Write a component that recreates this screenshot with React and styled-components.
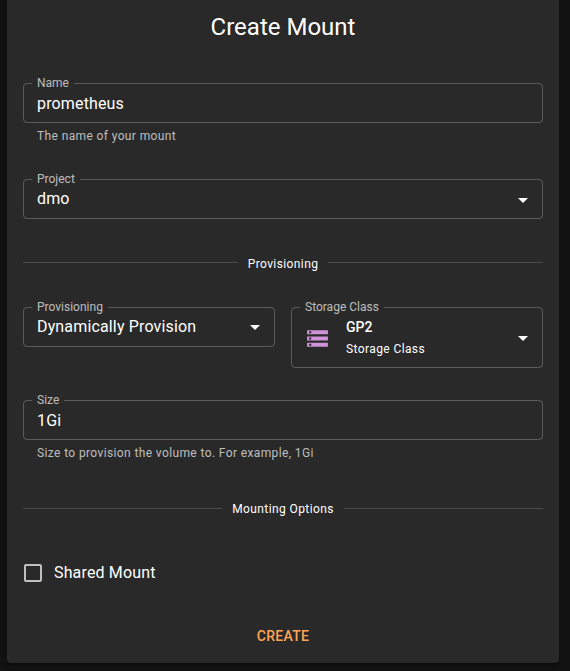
import React from "react";
import styled, { createGlobalStyle } from "styled-components";

const Global = createGlobalStyle`
  html, body { margin: 0; padding: 0; background: #121212; }
  body { font-family: Roboto, "Liberation Sans", sans-serif; color: #fff; overflow: hidden; }
`;

const Page = styled.div`
  width: 570px;
  height: 671px;
  padding: 0 11px 8px 7px;
  box-sizing: border-box;
`;

const Card = styled.form`
  height: 663px;
  box-sizing: border-box;
  background: #292929;
  border-radius: 0 0 4px 4px;
  box-shadow: 0 2px 4px rgba(0, 0, 0, 0.4);
  padding: 0 16px;
  display: flex;
  flex-direction: column;
`;

const Title = styled.h2`
  margin: 0;
  padding-top: 11px;
  height: 77px;
  box-sizing: border-box;
  text-align: center;
  font-size: 24px;
  font-weight: 400;
  line-height: 32px;
  letter-spacing: 0;
`;

const Outline = styled.fieldset`
  margin: 0;
  padding: 0 13px;
  min-width: 0;
  min-height: ${(p) => p.$height + 6}px;
  box-sizing: border-box;
  border: 1px solid rgba(255, 255, 255, 0.23);
  border-radius: 4px;
  display: flex;
  align-items: ${(p) => (p.$center ? "center" : "flex-start")};
  flex: ${(p) => (p.$grow ? "1 1 0" : "none")};
`;

const Legend = styled.legend`
  margin-left: -5px;
  padding: 0 5px;
  font-size: 12px;
  line-height: 12px;
  color: rgba(255, 255, 255, 0.7);
  letter-spacing: 0;
`;

const Value = styled.div`
  flex: 1;
  padding-top: ${(p) => (p.$select ? 1.5 : 3)}px;
  font-size: 16px;
  line-height: 23px;
  letter-spacing: 0.15px;
  color: #fff;
`;

const Arrow = styled.svg`
  width: 24px;
  height: 24px;
  fill: #fff;
  flex: none;
  margin-right: -6px;
  margin-top: ${(p) => p.$offset}px;
`;

const Helper = styled.p`
  margin: 3px 0 0 14px;
  font-size: 12px;
  line-height: 20px;
  letter-spacing: 0.38px;
  color: rgba(255, 255, 255, 0.7);
`;

const Group = styled.div`
  margin-bottom: ${(p) => p.$after}px;
`;

const Divider = styled.div`
  display: flex;
  align-items: center;
  gap: 10px;
  height: 14px;
  font-size: 12px;
  letter-spacing: 0.4px;
  color: #fff;
  margin-bottom: ${(p) => p.$after}px;
  &::before,
  &::after {
    content: "";
    flex: 1;
    height: 1px;
    background: rgba(255, 255, 255, 0.16);
  }
`;

const DividerLabel = styled.span`
  margin-top: ${(p) => p.$drop}px;
`;

const Row = styled.div`
  display: flex;
  align-items: flex-start;
  gap: 16px;
  margin-bottom: 26px;
`;

const StorageIcon = styled.svg`
  width: 25px;
  height: 25px;
  fill: #ce93d8;
  flex: none;
  margin: 4px 16px 0 0;
`;

const StorageText = styled.div`
  flex: 1;
  margin-top: 4px;
`;

const StorageName = styled.div`
  font-size: 14px;
  font-weight: 500;
  line-height: 20px;
`;

const StorageCaption = styled.div`
  font-size: 12px;
  line-height: 20px;
  letter-spacing: 0.4px;
  margin-top: 2px;
`;

const CheckLabel = styled.label`
  display: flex;
  align-items: center;
  gap: 12px;
  height: 24px;
  font-size: 16px;
  letter-spacing: 0.15px;
  margin-left: -2px;
  margin-bottom: 39px;
`;

const CheckBox = styled.svg`
  width: 24px;
  height: 24px;
  fill: rgba(255, 255, 255, 0.7);
  flex: none;
  margin-right: -3px;
`;

const CheckText = styled.span`
  margin-bottom: 2px;
`;

const Submit = styled.button`
  align-self: center;
  background: none;
  border: 0;
  padding: 0;
  font-family: inherit;
  font-size: 14px;
  font-weight: 500;
  line-height: 24px;
  letter-spacing: 0.3px;
  color: #ffa657;
  text-transform: uppercase;
`;

const ArrowDrop = ({ offset = 0 }) => (
  <Arrow viewBox="0 0 24 24" $offset={offset}>
    <path d="M7 10l5 5 5-5z" />
  </Arrow>
);

const Field = ({ label, height = 40, grow, center, children }) => (
  <Outline $height={height} $grow={grow} $center={center}>
    <Legend>{label}</Legend>
    {children}
  </Outline>
);

export default function App() {
  return (
    <Page>
      <Global />
      <Card>
        <Title>Create Mount</Title>
        <Group $after={27}>
          <Field label="Name">
            <Value>prometheus</Value>
          </Field>
          <Helper>The name of your mount</Helper>
        </Group>
        <Group $after={36}>
          <Field label="Project">
            <Value $select>dmo</Value>
            <ArrowDrop offset={3} />
          </Field>
        </Group>
        <Divider $after={32}>
          <DividerLabel $drop={4}>Provisioning</DividerLabel>
        </Divider>
        <Row>
          <Field label="Provisioning" grow>
            <Value $select>Dynamically Provision</Value>
            <ArrowDrop offset={2} />
          </Field>
          <Field label="Storage Class" height={61} grow center>
            <StorageIcon viewBox="0 0 24 24">
              <path d="M2 20h20v-4H2v4zm2-3h2v2H4v-2zM2 4v4h20V4H2zm4 3H4V5h2v2zm-4 7h20v-4H2v4zm2-3h2v2H4v-2z" />
            </StorageIcon>
            <StorageText>
              <StorageName>GP2</StorageName>
              <StorageCaption>Storage Class</StorageCaption>
            </StorageText>
            <ArrowDrop offset={4} />
          </Field>
        </Row>
        <Group $after={38}>
          <Field label="Size">
            <Value>1Gi</Value>
          </Field>
          <Helper>Size to provision the volume to. For example, 1Gi</Helper>
        </Group>
        <Divider $after={46}>
          <DividerLabel $drop={2}>Mounting Options</DividerLabel>
        </Divider>
        <CheckLabel>
          <CheckBox viewBox="0 0 24 24">
            <path d="M19 5v14H5V5h14m0-2H5c-1.1 0-2 .9-2 2v14c0 1.1.9 2 2 2h14c1.1 0 2-.9 2-2V5c0-1.1-.9-2-2-2z" />
          </CheckBox>
          <CheckText>Shared Mount</CheckText>
        </CheckLabel>
        <Submit type="button">Create</Submit>
      </Card>
    </Page>
  );
}
